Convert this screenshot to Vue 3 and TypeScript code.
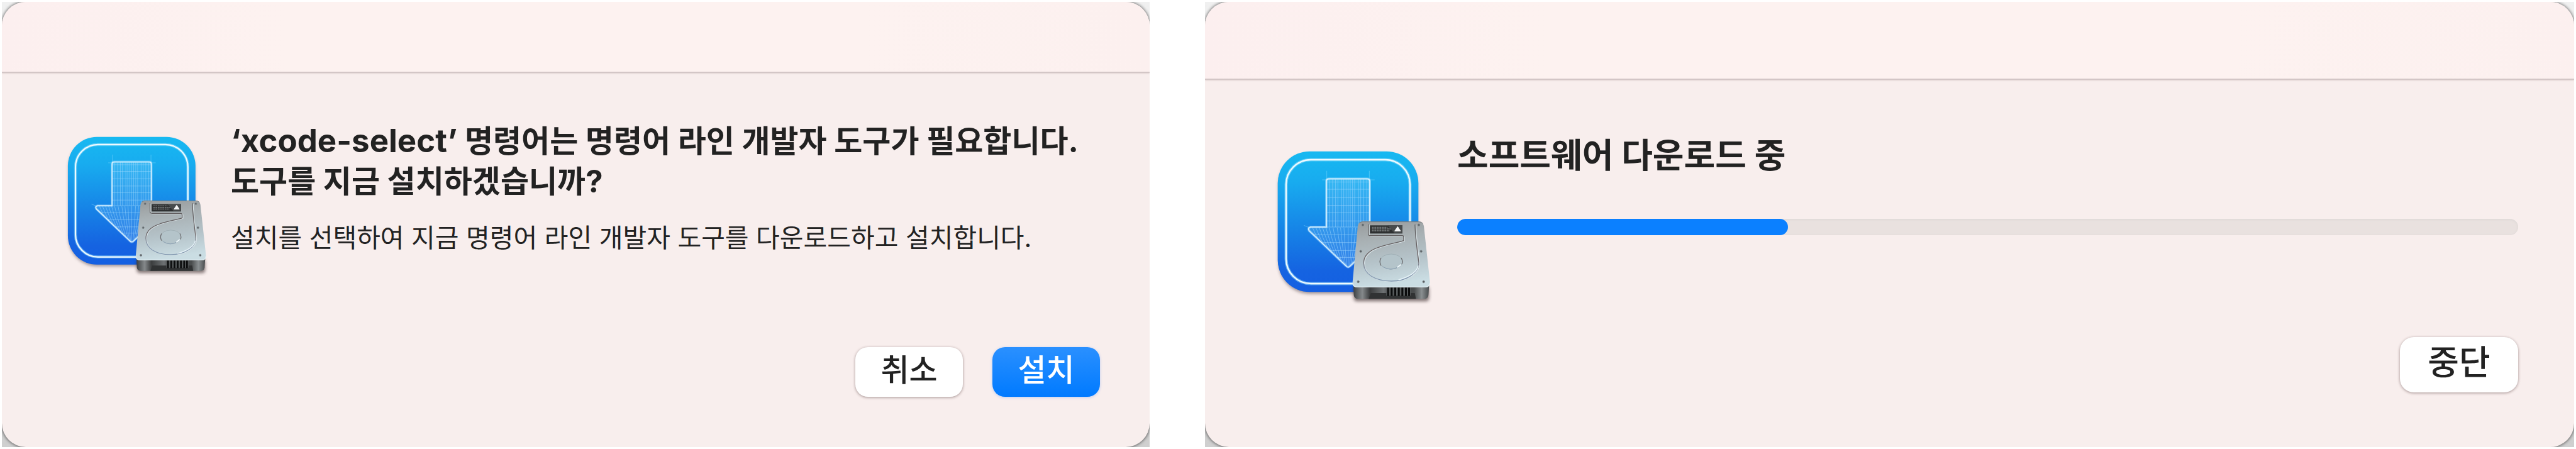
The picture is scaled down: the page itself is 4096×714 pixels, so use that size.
<script setup lang="ts">
interface Action {
  label: string
  primary?: boolean
}

interface Dialog {
  id: string
  size: 'regular' | 'large'
  command?: string
  title: string[]
  message?: string
  progress?: number
  actions: Action[]
}

const dialogs: Dialog[] = [
  {
    id: 'confirm',
    size: 'regular',
    command: '‘xcode-select’',
    title: [' 명령어는 명령어 라인 개발자 도구가 필요합니다.', '도구를 지금 설치하겠습니까?'],
    message: '설치를 선택하여 지금 명령어 라인 개발자 도구를 다운로드하고 설치합니다.',
    actions: [{ label: '취소' }, { label: '설치', primary: true }],
  },
  {
    id: 'download',
    size: 'large',
    title: ['소프트웨어 다운로드 중'],
    progress: 31.2,
    actions: [{ label: '중단' }],
  },
]

const columns = [303, 318, 332, 343, 361, 371, 382, 392, 402, 413, 423, 441, 452, 466, 481]
const rows = [208, 243, 282, 320, 355, 394, 423]
const headRows = [460, 497, 535, 568]
const fan = [222, 238, 254, 270, 286, 302, 320, 340, 356, 372, 392, 412, 428, 444, 464, 482, 500]
const screws = [
  [462, 413], [729, 413], [452, 539], [740, 539], [440, 684], [752, 684],
]
const vents = [582, 599, 616, 633, 650, 667, 682]
const arrow = 'M300 193H483Q495 193 495 205V423H573Q589 428 580 441L402 609Q392 620 382 609L206 441Q197 428 212 423H288V205Q288 193 300 193Z'
</script>

<template>
  <main class="desk">
    <div v-for="d in dialogs" :key="d.id" class="frame" :class="d.size">
      <section class="window" role="dialog" :aria-labelledby="`${d.id}-title`">
        <header class="titlebar"></header>
        <div class="content">
          <svg class="icon" viewBox="0 0 840 810" aria-hidden="true">
            <defs>
              <linearGradient :id="`${d.id}-sky`" x1="0" y1="0" x2="0" y2="1">
                <stop offset="0" stop-color="#17b9f1" />
                <stop offset=".22" stop-color="#18abef" />
                <stop offset=".6" stop-color="#167fe6" />
                <stop offset=".85" stop-color="#1563e1" />
                <stop offset="1" stop-color="#145fe2" />
              </linearGradient>
              <linearGradient :id="`${d.id}-plate`" x1="0" y1="0" x2=".15" y2="1">
                <stop offset="0" stop-color="#979a9b" />
                <stop offset=".3" stop-color="#a8b0b3" />
                <stop offset=".65" stop-color="#b5c3c9" />
                <stop offset="1" stop-color="#cadde3" />
              </linearGradient>
              <linearGradient :id="`${d.id}-front`" x1="0" y1="0" x2="1" y2="0">
                <stop offset="0" stop-color="#3c3f41" />
                <stop offset=".12" stop-color="#85898b" />
                <stop offset=".22" stop-color="#3b3d3e" />
                <stop offset=".4" stop-color="#6d7173" />
                <stop offset=".5" stop-color="#3f4142" />
                <stop offset=".8" stop-color="#4a4d4e" />
                <stop offset=".9" stop-color="#898e90" />
                <stop offset="1" stop-color="#464a4c" />
              </linearGradient>
              <linearGradient :id="`${d.id}-groove`" x1="0" y1="0" x2="0" y2="1">
                <stop offset="0" stop-color="#5c5c5e" />
                <stop offset=".6" stop-color="#695f60" />
                <stop offset=".8" stop-color="#8b9bb0" />
                <stop offset="1" stop-color="#7d94ad" />
              </linearGradient>
              <filter :id="`${d.id}-soft`" x="-20%" y="-20%" width="140%" height="140%">
                <feGaussianBlur stdDeviation="8" />
              </filter>
              <clipPath :id="`${d.id}-arrow`"><path :d="arrow" /></clipPath>
            </defs>

            <rect x="60" y="74" width="662" height="668" rx="150" fill="#4b3a40" opacity=".5" :filter="`url(#${d.id}-soft)`" />
            <rect x="56" y="62" width="671" height="671" rx="152" :fill="`url(#${d.id}-sky)`" />
            <rect x="96" y="102" width="591" height="591" rx="118" fill="none" stroke="#8fdcfa" stroke-opacity=".55" stroke-width="15" />
            <rect x="96" y="102" width="591" height="591" rx="118" fill="none" stroke="#effaff" stroke-width="7" />

            <g fill="none" stroke="#8fe0ff" stroke-opacity=".45" stroke-width="3">
              <path d="M290 155V200M493 155V200M268 198H300M485 198H518M180 415L212 428" />
            </g>
            <path :d="arrow" fill="#9adcff" fill-opacity=".22" />
            <g :clip-path="`url(#${d.id}-arrow)`" fill="none" stroke="#a5dcff" stroke-opacity=".5" stroke-width="3">
              <path v-for="x in columns" :key="`c${x}`" :d="`M${x} 193V423`" />
              <path v-for="y in rows" :key="`r${y}`" :d="`M288 ${y}H495`" />
              <path v-for="y in headRows" :key="`h${y}`" :d="`M200 ${y}H585`" />
              <path
                v-for="x in fan"
                :key="`f${x}`"
                :d="`M${x} 426Q${x + (392 - x) * 0.25} 530 ${392 + (x - 392) * 0.3} 612`"
              />
            </g>
            <path :d="arrow" fill="none" stroke="#b9e6ff" stroke-opacity=".4" stroke-width="12" />
            <path :d="arrow" fill="none" stroke="#d9f1ff" stroke-width="5" />

            <path d="M418 712H778V762Q778 778 760 778H436Q418 778 418 760Z" fill="#3a2c2c" opacity=".6" :filter="`url(#${d.id}-soft)`" />
            <path d="M416 690H779L775 748Q773 766 755 766H440Q421 766 419 748Z" :fill="`url(#${d.id}-front)`" />
            <path d="M490 766Q496 748 500 738H710L715 766Z" fill="#303233" />
            <rect x="574" y="708" width="116" height="42" fill="#55595a" />
            <rect v-for="x in vents" :key="x" :x="x - 4" y="712" width="9" height="40" fill="#0b0c0d" />
            <path d="M462 397H728Q750 398 753 418L782 684Q783 711 760 711H434Q412 711 413 686L438 418Q441 398 462 397Z" :fill="`url(#${d.id}-plate)`" />
            <path d="M414 690Q414 708 434 709H760Q780 709 781 690" fill="none" stroke="#e1edf1" stroke-width="4" />
            <path d="M446 404Q452 398 462 398H728Q742 398 748 406" fill="none" stroke="#777a7b" stroke-width="3" />

            <path d="M488 410V455Q488 464 498 464H650Q657 464 657 472V488C600 507 466 514 466 595C466 648 520 681 598 681C674 681 729 640 729 596C723 540 712 475 711 411" fill="none" stroke="#d9e4e8" stroke-width="4" transform="translate(4 2)" />
            <path d="M488 410V455Q488 464 498 464H650Q657 464 657 472V488C600 507 466 514 466 595C466 648 520 681 598 681C674 681 729 640 729 596C723 540 712 475 711 411" fill="none" :stroke="`url(#${d.id}-groove)`" stroke-width="4" />
            <path d="M632 675Q718 650 726 607" fill="none" stroke="#e6f2f7" stroke-width="5" />
            <ellipse cx="597" cy="588" rx="54" ry="36" fill="#b4c4ca" stroke="#a0afb5" stroke-width="3" />
            <path d="M549 570Q538 588 549 607M645 570Q655 588 648 600" fill="none" stroke="#6e6f72" stroke-width="4" />
            <path d="M557 612Q594 637 633 612" fill="none" stroke="#8ba1b5" stroke-width="3" />
            <path d="M626 616L644 602" stroke="#eef7fa" stroke-width="6" />

            <rect x="496" y="415" width="155" height="39" fill="#2e3031" />
            <path d="M505 424H580M505 432H596M505 441H590" fill="none" stroke="#85898b" stroke-width="4" stroke-dasharray="9 3" />
            <path d="M580 415L612 452H651V415Z" fill="#484b4c" />
            <path d="M614 442L628 421L642 442Z" fill="#f5f5f5" stroke="#f5f5f5" stroke-width="3" />
            <circle v-for="([x, y], i) in screws" :key="i" :cx="x" :cy="y" r="5" fill="#55595d" stroke="#7e878b" stroke-width="3" />
          </svg>

          <div class="text">
            <h1 :id="`${d.id}-title`" class="title">
              <span v-for="(line, i) in d.title" :key="line" class="line"><span v-if="d.command && i === 0" class="command">{{ d.command }}</span>{{ line }}</span>
            </h1>
            <p v-if="d.message" class="message">{{ d.message }}</p>
            <progress
              v-if="d.progress !== undefined"
              class="bar"
              max="100"
              :value="d.progress"
              :aria-labelledby="`${d.id}-title`"
            ></progress>
          </div>
        </div>
        <footer class="actions">
          <button
            v-for="a in d.actions"
            :key="a.label"
            type="button"
            class="button"
            :class="{ primary: a.primary }"
          >{{ a.label }}</button>
        </footer>
      </section>
    </div>
  </main>
</template>

<style>
body {
  margin: 0;
  background: #fff;
}
</style>

<style scoped>
.desk {
  box-sizing: border-box;
  min-height: 100vh;
  padding: 3px;
  display: flex;
  gap: 88px;
  font-family: Inter, "Noto Sans CJK KR", sans-serif;
  color: #222;
}

.frame {
  display: flex;
  min-width: 0;
  overflow: hidden;
  background: linear-gradient(#f0f0f0, #cfcfcf);
}

.frame.regular {
  flex: 1825 1 0;
}

.frame.large {
  flex: 2177 1 0;
}

.window {
  flex: 1;
  min-width: 0;
  display: flex;
  flex-direction: column;
  overflow: hidden;
  border-radius: 38px;
  background: #f8eeed;
  box-shadow: 0 0 4px 1px rgba(0, 0, 0, 0.5);
}

.titlebar {
  box-sizing: border-box;
  height: 113px;
  border-bottom: 2px solid #d3c6c6;
  background: linear-gradient(90deg, #fcefef, #fdf2f0 25%, #fdf2f0 75%, #fcf0ef);
  box-shadow: 0 1px 2px rgba(120, 90, 90, 0.2);
}

.content {
  display: flex;
  align-items: flex-start;
  gap: 22px;
  padding: 77px 79px 0 88px;
}

.icon {
  flex: none;
  width: 254px;
  height: 245px;
  margin-top: 6px;
}

.text {
  flex: 1;
  min-width: 0;
}

.title {
  margin: 0;
  font-size: 49px;
  line-height: 64px;
  font-weight: 700;
}

.line {
  display: block;
}

.command {
  font-size: 51px;
  line-height: 1;
}

.message {
  margin: 32px 0 0;
  font-size: 41px;
  line-height: 50px;
}

.bar {
  display: block;
  width: 100%;
  height: 26px;
  margin-top: 65px;
  border: 0;
  border-radius: 13px;
  overflow: hidden;
  appearance: none;
  background: #e9e1df;
}

.bar::-webkit-progress-bar {
  border-radius: 13px;
  background: #e9e1df;
  box-shadow: inset 0 1px 3px 1px #e0dad8;
}

.bar::-webkit-progress-value {
  border-radius: 13px;
  background: #0b80ff;
}

.actions {
  display: flex;
  justify-content: flex-end;
  gap: 47px;
  margin-top: auto;
  padding: 32px 79px 80px;
}

.button {
  box-sizing: border-box;
  min-width: 171px;
  height: 79px;
  padding: 0 24px 6px;
  border: 0;
  border-radius: 20px;
  background: #fff;
  box-shadow: 0 1px 4px rgba(60, 30, 30, 0.45);
  color: #222;
  font-family: inherit;
  font-size: 49px;
  font-weight: 500;
  line-height: 64px;
}

.button.primary {
  background: linear-gradient(#2a90ff, #007aff);
  box-shadow: 0 1px 4px rgba(0, 100, 255, 0.25);
  color: #fff;
}

.large .titlebar {
  height: 124px;
}

.large .content {
  gap: 24px;
  padding: 86px 89px 0 97px;
}

.large .icon {
  width: 280px;
  height: 270px;
  margin-top: 7px;
}

.large .title {
  font-size: 54px;
  line-height: 70px;
}

.large .actions {
  padding: 32px 89px 87px;
}

.large .button {
  min-width: 188px;
  height: 88px;
  border-radius: 22px;
  font-size: 54px;
}
</style>
